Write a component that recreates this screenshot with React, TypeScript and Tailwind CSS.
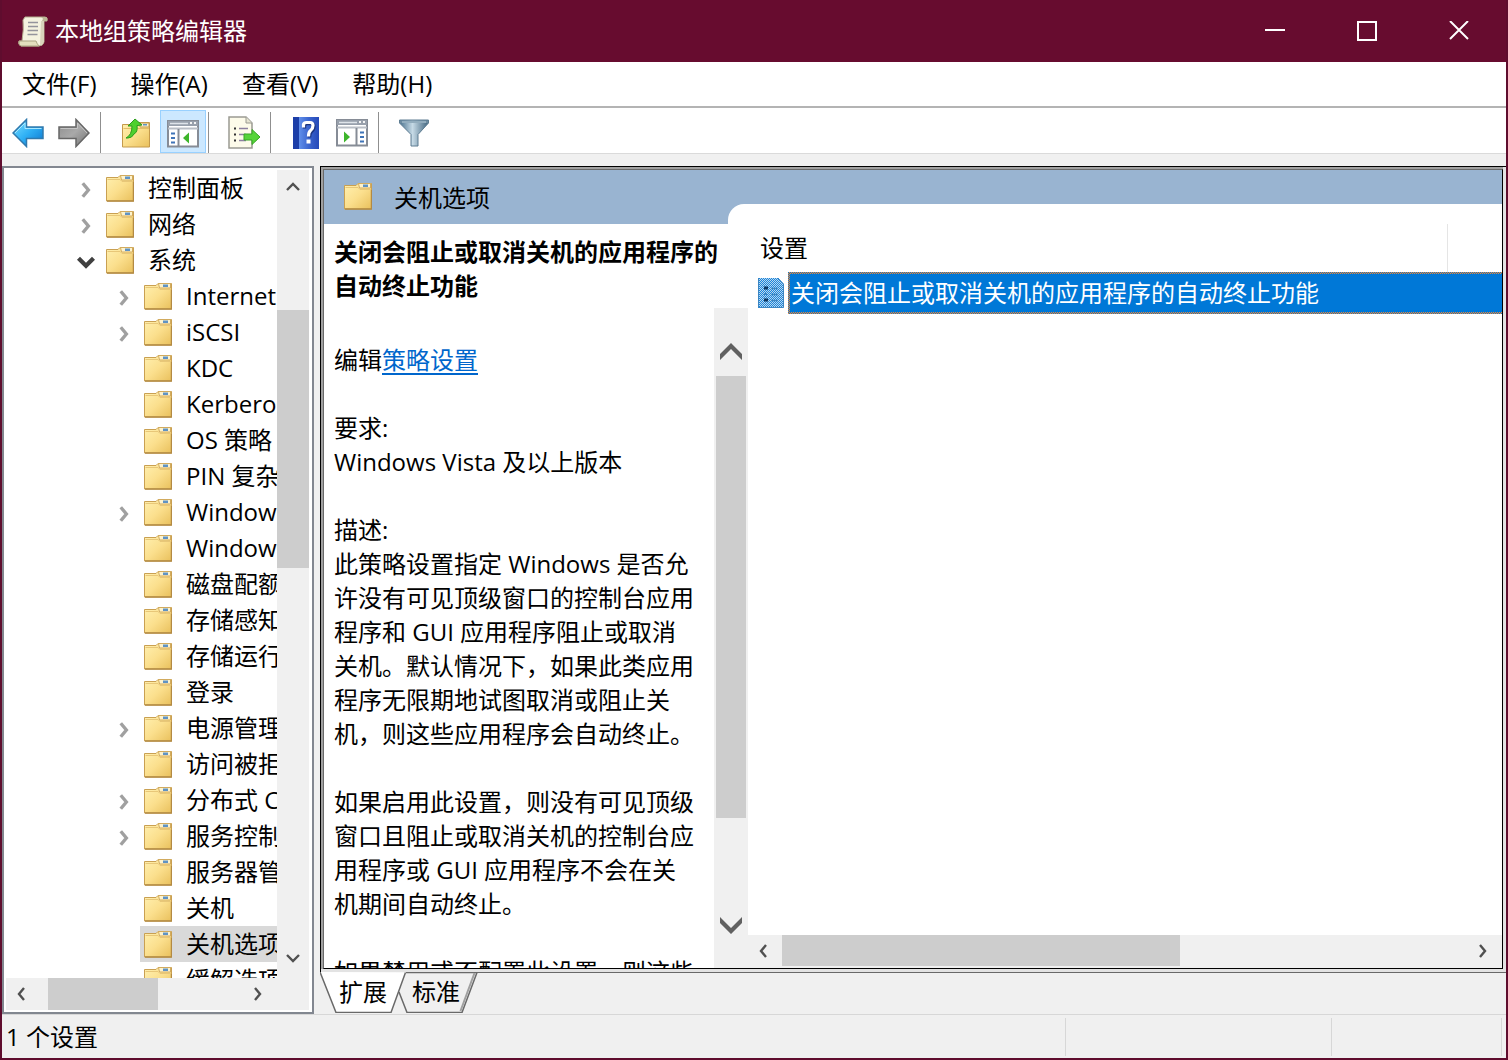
import React from "react";

type Dir = "up" | "down" | "left" | "right";

const chevronPaths: Record<Dir, string> = {
  up: "M2 10 L8 4 L14 10",
  down: "M2 5 L8 11 L14 5",
  left: "M10 2 L5 8 L10 14",
  right: "M6 2 L11 8 L6 14",
};

const bigChevronPaths = {
  up: "M0 17 L11 6 L22 17 V11 L11 0 L0 11 Z",
  down: "M0 0 L11 11 L22 0 V6 L11 17 L0 6 Z",
};

function Chevron({ dir, color = "#505050", width = 2.4, className = "size-4" }: { dir: Dir; color?: string; width?: number; className?: string }) {
  return (
    <svg viewBox="0 0 16 16" className={className} fill="none" stroke={color} strokeWidth={width} aria-hidden="true">
      <path d={chevronPaths[dir]} />
    </svg>
  );
}

function BigChevron({ dir }: { dir: "up" | "down" }) {
  return (
    <svg viewBox="0 0 22 17" className="h-[17px] w-[22px]" fill="#606060" aria-hidden="true">
      <path d={bigChevronPaths[dir]} />
    </svg>
  );
}

function Gradients() {
  return (
    <svg className="absolute size-0" aria-hidden="true">
      <defs>
        <linearGradient id="folder" x1="0" y1="0" x2="1" y2="1">
          <stop offset="0" stopColor="#fff0b0" />
          <stop offset="0.5" stopColor="#fbdf8d" />
          <stop offset="1" stopColor="#e9c05c" />
        </linearGradient>
        <linearGradient id="blueArrow" x1="0" y1="0" x2="1" y2="1">
          <stop offset="0" stopColor="#7fe0ff" />
          <stop offset="0.5" stopColor="#2fb0f5" />
          <stop offset="1" stopColor="#0a72cc" />
        </linearGradient>
        <linearGradient id="grayArrow" x1="0" y1="0" x2="1" y2="1">
          <stop offset="0" stopColor="#8c8c8c" />
          <stop offset="0.5" stopColor="#a9a9a9" />
          <stop offset="1" stopColor="#727272" />
        </linearGradient>
        <linearGradient id="help" x1="0" y1="0" x2="1" y2="0">
          <stop offset="0" stopColor="#1c3ea8" />
          <stop offset="0.22" stopColor="#1c3ea8" />
          <stop offset="0.24" stopColor="#5f8eea" />
          <stop offset="0.6" stopColor="#3c66cf" />
          <stop offset="1" stopColor="#2549b8" />
        </linearGradient>
        <linearGradient id="funnel" x1="0" y1="0" x2="1" y2="0">
          <stop offset="0" stopColor="#48708c" />
          <stop offset="0.45" stopColor="#c6dae6" />
          <stop offset="1" stopColor="#3f637d" />
        </linearGradient>
      </defs>
    </svg>
  );
}

function FolderIcon() {
  return (
    <svg viewBox="0 0 28 27" className="h-[27px] w-7 shrink-0" aria-hidden="true">
      <path d="M0.5 2.5 H12 L14 0.500 H27.5 V26 H0.5 Z" fill="url(#folder)" stroke="#c9a052" />
      <path d="M14.500 0.500 H26.5 V5 H15.500 Z" fill="#fdf3cd" stroke="#d2ab5e" />
      <path d="M19 1.500 H24 V4 H19 Z" fill="#5f93c4" />
      <path d="M1.500 4.500 H14 L16 6.500 H27" fill="none" stroke="#e8c778" />
      <path d="M1 26 H27.5 V7" fill="none" stroke="#b38a43" strokeWidth="1.5" />
    </svg>
  );
}

function ScrollIcon() {
  return (
    <svg viewBox="0 0 30 32" className="h-8 w-[30px]" aria-hidden="true">
      <path d="M7 2 H27 Q30 2 29 6 H26 V27 Q25 31 21 31 H3 Q0 30 1 26 H4 Q6 14 5 5 Z" fill="#f4f2df" stroke="#b5ae8f" />
      <path d="M23 2 Q26 3 24 6 H29 Q30 2 27 2 Z" fill="#bcb596" />
      <path d="M23 6 H26 V26 Q25 30 22 30 Z" fill="#d8d4bb" />
      <path d="M1 26 H18 Q19 29 21 31 H3 Q0 30 1 26 Z" fill="#e3dfbe" stroke="#a9a382" />
      <path d="M10 7.500 H20 M10 11.500 H20 M9.500 15.500 H20 M9.500 19.500 H19.500" stroke="#94949c" strokeWidth="1.600" />
    </svg>
  );
}

function ArrowIcon({ forward }: { forward?: boolean }) {
  return forward ? (
    <svg viewBox="0 0 32 30" className="h-[30px] w-8" aria-hidden="true">
      <path d="M31 15 L18 1.500 V9 H1 V20.500 H18 V28.500 Z" fill="url(#grayArrow)" stroke="#666" strokeWidth="1.500" />
      <path d="M29 15 L19.500 5 V10.500 H2.500" fill="none" stroke="#c4c4c4" />
    </svg>
  ) : (
    <svg viewBox="0 0 32 30" className="h-[30px] w-8" aria-hidden="true">
      <path d="M1 15 L14.500 1.500 V9 H31 V20.500 H14.500 V28.500 Z" fill="url(#blueArrow)" stroke="#3079ad" strokeWidth="1.500" />
      <path d="M3 15 L13 5 V10.500 H29.500" fill="none" stroke="#a8e8ff" />
    </svg>
  );
}

function UpFolderIcon() {
  return (
    <svg viewBox="0 0 28 30" className="h-[30px] w-7" aria-hidden="true">
      <path d="M0.500 6.500 H10 L12 4.500 H27.500 V29 H0.500 Z" fill="url(#folder)" stroke="#c49a4c" />
      <path d="M18 5 H27 V9 H18 Z" fill="#fdf3cd" stroke="#c49a4c" />
      <path d="M21 6 H25 V7.500 H21 Z" fill="#5f93c4" />
      <path d="M1.500 10.500 H27" stroke="#e3bd68" />
      <path d="M4 20 Q10 17 10 8 L6 8 L13 1 L20 7 L15 7.500 Q16 14 12 16 Q10 20 6 20 Z" fill="#4fd02f" stroke="#2c9c1b" />
    </svg>
  );
}

function PaneIcon({ flip }: { flip?: boolean }) {
  return (
    <svg viewBox="0 0 32 28" className="h-7 w-8" aria-hidden="true">
      <path d="M1 1 H31 V26.500 H1 Z" fill="#fff" stroke="#868c96" strokeWidth="2" />
      <path d="M1 1 H31 V6 H1 Z" fill="#98a0ac" />
      <path d="M3 3.500 H21" stroke="#dfe4ea" strokeWidth="1.500" />
      <path d="M23 3 h2 M27 3 h2" stroke="#f4f4f4" strokeWidth="2" />
      <path d="M1 8.500 H31" stroke="#b9bec6" strokeWidth="2" />
      {flip ? (
        <>
          <path d="M20.500 9 V27" stroke="#868c96" strokeWidth="2" />
          <path d="M24 13.500 h4 M24 18 h4 M24 22.500 h4" stroke="#3f74b8" strokeWidth="2" />
          <path d="M8 12.500 L14 18 L8 23.500 Z" fill="#3db52b" />
        </>
      ) : (
        <>
          <path d="M11.500 9 V27" stroke="#868c96" strokeWidth="2" />
          <path d="M4 13.500 h4 M4 18 h4 M4 22.500 h4" stroke="#3f74b8" strokeWidth="2" />
          <path d="M22 12.500 L16 18 L22 23.500 Z" fill="#3db52b" />
        </>
      )}
    </svg>
  );
}

function ExportIcon() {
  return (
    <svg viewBox="0 0 33 33" className="size-[33px]" aria-hidden="true">
      <path d="M1 1 H18 L24 7 V32 H1 Z" fill="#fdfbea" stroke="#9a9a92" strokeWidth="1.500" />
      <path d="M18 1 V7 H24" fill="#e6e4d2" stroke="#9a9a92" />
      <path d="M6 12.500 h2 M6 18.500 h2 M6 24.500 h2" stroke="#333" strokeWidth="2" />
      <path d="M11 12.500 H20 M11 18.500 H18 M11 24.500 H18" stroke="#8d80a0" strokeWidth="1.500" />
      <path d="M16 18 H24 V13.500 L32 21 L24 28.500 V24 H16 Z" fill="#56d43a" stroke="#37a624" />
    </svg>
  );
}

function HelpIcon() {
  return (
    <svg viewBox="0 0 26 32" className="h-8 w-[26px]" aria-hidden="true">
      <path d="M0 0 H26 V32 H0 Z" fill="url(#help)" />
      <path d="M10.500 10.500 V7.500 Q11 5.500 13.500 5.500 H17 Q20 5.500 20 8.500 Q20 11.500 17.500 13.500 Q15.500 15 15.500 19.500" fill="none" stroke="#1c3580" strokeWidth="3.500" transform="translate(1 1)" />
      <path d="M10.500 10.500 V7.500 Q11 5.500 13.500 5.500 H17 Q20 5.500 20 8.500 Q20 11.500 17.500 13.500 Q15.500 15 15.500 19.500" fill="none" stroke="#fff" strokeWidth="3.200" />
      <path d="M13.500 22.500 h4 v4 h-4 Z" fill="#fff" />
    </svg>
  );
}

function FunnelIcon() {
  return (
    <svg viewBox="0 0 30 28" className="h-7 w-[30px]" aria-hidden="true">
      <path d="M0.500 1 H29.500 V4 L19 15.500 V27 H12 V15.500 L0.500 4 Z" fill="url(#funnel)" stroke="#5e7d92" />
      <path d="M1 1.500 H29 V4 H1 Z" fill="#6c8ba0" />
      <path d="M3 3 H27" stroke="#b9cfdc" />
    </svg>
  );
}

function PolicyIcon() {
  return (
    <svg viewBox="0 0 26 30" className="h-[30px] w-[26px] shrink-0" aria-hidden="true">
      <defs>
        <pattern id="dither" width="2" height="2" patternUnits="userSpaceOnUse">
          <path d="M0 0 H2 V2 H0 Z" fill="#1d84dc" />
          <path d="M0 0 h1 v1 h-1 Z M1 1 h1 v1 h-1 Z" fill="#b9d9ee" />
        </pattern>
      </defs>
      <path d="M0 0 H20 L26 6 V30 H0 Z" fill="url(#dither)" />
      <path d="M0.500 0 V29.500 H25.500 V6 L20 0" fill="none" stroke="#3d86c2" />
      <path d="M6 10 h4 M6 22 h4" stroke="#0b3763" strokeWidth="3" />
      <path d="M6 16 h3" stroke="#3d86c2" strokeWidth="2" />
      <path d="M13 10.500 h7 M13 16.500 h7 M13 22.500 h7" stroke="#3d86c2" strokeWidth="1.500" />
    </svg>
  );
}

interface Node {
  label: string;
  child?: boolean;
  state?: "closed" | "open";
  selected?: boolean;
}

const nodes: Node[] = [
  { label: "控制面板", state: "closed" },
  { label: "网络", state: "closed" },
  { label: "系统", state: "open" },
  { label: "Internet", child: true, state: "closed" },
  { label: "iSCSI", child: true, state: "closed" },
  { label: "KDC", child: true },
  { label: "Kerberos", child: true },
  { label: "OS 策略", child: true },
  { label: "PIN 复杂", child: true },
  { label: "Windows", child: true, state: "closed" },
  { label: "Windows", child: true },
  { label: "磁盘配额", child: true },
  { label: "存储感知", child: true },
  { label: "存储运行", child: true },
  { label: "登录", child: true },
  { label: "电源管理", child: true, state: "closed" },
  { label: "访问被拒", child: true },
  { label: "分布式 C", child: true, state: "closed" },
  { label: "服务控制", child: true, state: "closed" },
  { label: "服务器管", child: true },
  { label: "关机", child: true },
  { label: "关机选项", child: true, selected: true },
  { label: "缓解选项", child: true },
];

function TreeRow({ node }: { node: Node }) {
  return (
    <li
      role="treeitem"
      aria-selected={!!node.selected}
      aria-expanded={node.state ? node.state === "open" : undefined}
      className={node.child ? "flex h-9 pl-[104px]" : "flex h-9 pl-[66px]"}
    >
      <span className="flex w-[30px] shrink-0 items-center pt-1 pl-1">
        {node.state === "closed" && <Chevron dir="right" color="#a0a0a0" width={3} className="size-[18px]" />}
        {node.state === "open" && <Chevron dir="down" color="#404040" width={3.4} className="size-5" />}
      </span>
      <span className={node.selected ? "flex flex-1 items-center bg-[#d9d9d9] pl-1" : "flex flex-1 items-center pl-1"}>
        <FolderIcon />
        <span className="pl-3.5 whitespace-nowrap">{node.label}</span>
      </span>
    </li>
  );
}

const menus = ["文件(F)", "操作(A)", "查看(V)", "帮助(H)"];

function ToolButton({ label, active, children }: { label: string; active?: boolean; children: React.ReactNode }) {
  return (
    <button
      type="button"
      aria-label={label}
      className={
        active
          ? "flex w-[46px] items-center justify-center border border-[#99d1ff] bg-[#cce8ff] pt-1"
          : "flex w-[46px] items-center justify-center pt-0.5"
      }
    >
      {children}
    </button>
  );
}

function Divider() {
  return <div className="mt-0.5 mr-3 w-px bg-[#8f8f8f]" />;
}

export default function App() {
  return (
    <div className="flex h-screen flex-col overflow-hidden border-x-2 border-b-2 border-[#5f0d2e] bg-[#f0f0f0] font-['Open_Sans','Noto_Sans_CJK_SC',sans-serif] text-2xl text-black">
      <Gradients />
      <header className="-mx-0.5 flex h-[62px] shrink-0 items-center bg-[#670c2f] text-white">
        <div className="flex flex-1 items-center gap-[7px] pl-[18px]">
          <ScrollIcon />
          <h1>本地组策略编辑器</h1>
        </div>
        <button type="button" aria-label="最小化" className="flex h-full w-[92px] items-center justify-center">
          <svg viewBox="0 0 20 20" className="size-5" fill="none" stroke="#fff" strokeWidth="2" aria-hidden="true"><path d="M0 9 H20" /></svg>
        </button>
        <button type="button" aria-label="最大化" className="flex h-full w-[92px] items-center justify-center">
          <svg viewBox="0 0 20 20" className="size-5" fill="none" stroke="#fff" strokeWidth="2" aria-hidden="true"><path d="M1 1 H19 V19 H1 Z" /></svg>
        </button>
        <button type="button" aria-label="关闭" className="mr-[3px] flex h-full w-[92px] items-center justify-center">
          <svg viewBox="0 0 20 20" className="size-5" fill="none" stroke="#fff" strokeWidth="2" aria-hidden="true"><path d="M1 0 L19 18 M19 0 L1 18" /></svg>
        </button>
      </header>

      <nav className="flex h-[46px] shrink-0 items-center gap-[34px] border-b-2 border-[#b4b4b4] bg-white pl-5">
        {menus.map((m) => (
          <button key={m} type="button" className="whitespace-nowrap">{m}</button>
        ))}
      </nav>

      <div role="toolbar" aria-label="工具栏" className="flex h-[46px] shrink-0 border-b border-[#dadada] bg-white pt-0.5 pl-[3px]">
        <ToolButton label="后退"><ArrowIcon /></ToolButton>
        <ToolButton label="前进"><ArrowIcon forward /></ToolButton>
        <div className="w-[3px]" />
        <Divider />
        <ToolButton label="上一级"><UpFolderIcon /></ToolButton>
        <div className="w-px" />
        <ToolButton label="显示/隐藏控制台树" active><PaneIcon /></ToolButton>
        <div className="w-0.5" />
        <Divider />
        <ToolButton label="导出列表"><ExportIcon /></ToolButton>
        <div className="w-[3px]" />
        <Divider />
        <ToolButton label="帮助"><HelpIcon /></ToolButton>
        <ToolButton label="显示/隐藏操作窗格"><PaneIcon flip /></ToolButton>
        <div className="w-[3px]" />
        <Divider />
        <ToolButton label="筛选器"><FunnelIcon /></ToolButton>
      </div>

      <main className="flex min-h-0 flex-1 gap-1.5 pt-3">
        <section className="flex w-[312px] shrink-0 border-2 border-[#828790] bg-white p-0.5">
          <div className="flex min-w-0 flex-1 flex-col">
            <ul role="tree" aria-label="控制台树" className="min-h-0 flex-1 overflow-hidden leading-9">
              {nodes.map((n, i) => <TreeRow key={i} node={n} />)}
            </ul>
            <div className="flex h-8 shrink-0 items-center bg-[#f0f0f0]">
              <button type="button" aria-label="向左滚动" className="flex w-[42px] pl-2"><Chevron dir="left" /></button>
              <div className="h-full w-[110px] bg-[#cdcdcd]" />
              <div className="flex-1" />
              <button type="button" aria-label="向右滚动" className="flex w-7"><Chevron dir="right" /></button>
            </div>
          </div>
          <div className="mr-px flex w-8 shrink-0 flex-col items-center bg-[#f0f0f0] pb-[34px]">
            <button type="button" aria-label="向上滚动" className="flex h-9 items-center"><Chevron dir="up" /></button>
            <div className="h-[104px]" />
            <div className="h-[258px] w-full bg-[#cdcdcd]" />
            <div className="flex-1" />
            <button type="button" aria-label="向下滚动" className="flex h-9 items-center"><Chevron dir="down" /></button>
          </div>
        </section>

        <section className="flex min-w-0 flex-1 flex-col">
          <div className="flex min-h-0 flex-1 border-t border-l border-black bg-[#e3e3e3] pr-[3px] pb-[3px]">
            <div className="flex min-w-0 flex-1 border-t-2 border-l-2 border-[#a0a0a0]">
              <div className="flex min-w-0 flex-1 flex-col border border-t-[#696969] border-r-black border-b-black border-l-[#696969] bg-white">
                <div className="flex h-[54px] shrink-0 items-stretch bg-[#99b4d1]">
                  <div className="flex w-[404px] shrink-0 items-center gap-[22px] pl-5 pb-0.5">
                    <FolderIcon />
                    <h2 className="pt-1">关机选项</h2>
                  </div>
                  <div className="mt-[34px] flex-1 rounded-tl-2xl bg-white" />
                </div>
                <div className="flex min-h-0 flex-1">
                  <div className="flex w-[424px] shrink-0 flex-col">
                    <h3 className="h-[84px] shrink-0 pt-[11px] pl-2.5 leading-[34px] font-bold whitespace-nowrap">
                      关闭会阻止或取消关机的应用程序的<br />自动终止功能
                    </h3>
                    <div className="flex min-h-0 flex-1">
                      <article className="min-w-0 flex-1 space-y-[34px] overflow-hidden pt-[35px] pl-2.5 leading-[34px] whitespace-nowrap">
                        <p>编辑<a href="#policy" className="text-[#0066cc] underline underline-offset-4">策略设置</a></p>
                        <p>要求:<br />Windows Vista 及以上版本</p>
                        <p>
                          描述:<br />此策略设置指定 Windows 是否允<br />许没有可见顶级窗口的控制台应用<br />程序和 GUI 应用程序阻止或取消<br />关机。默认情况下，如果此类应用<br />程序无限期地试图取消或阻止关<br />机，则这些应用程序会自动终止。
                        </p>
                        <p>
                          如果启用此设置，则没有可见顶级<br />窗口且阻止或取消关机的控制台应<br />用程序或 GUI 应用程序不会在关<br />机期间自动终止。
                        </p>
                        <p>如果禁用或不配置此设置，则这些</p>
                      </article>
                      <div className="flex w-[34px] shrink-0 flex-col items-center bg-[#f0f0f0] pb-[26px]">
                        <button type="button" aria-label="向上滚动" className="flex h-[68px] items-end pb-4"><BigChevron dir="up" /></button>
                        <div className="h-[442px] w-[30px] bg-[#cdcdcd]" />
                        <div className="flex-1" />
                        <button type="button" aria-label="向下滚动" className="flex h-[34px] items-center"><BigChevron dir="down" /></button>
                      </div>
                    </div>
                  </div>
                  <div className="flex min-w-0 flex-1 flex-col">
                    <table className="w-full table-fixed border-collapse text-left">
                      <thead>
                        <tr className="h-12">
                          <th className="border-r border-[#e5e5e5] pl-3 font-normal">设置</th>
                          <th className="w-[55px]" aria-label="状态" />
                        </tr>
                      </thead>
                      <tbody>
                        <tr>
                          <td colSpan={2} className="p-0">
                            <div className="flex items-center gap-1 pl-2.5">
                              <PolicyIcon />
                              <div className="flex-1 bg-[repeating-conic-gradient(#ff8728_0_25%,#0078d7_0_50%)] bg-[length:2px_2px] py-0.5 pl-0.5">
                                <span className="block h-[38px] bg-[#0078d7] pl-px leading-[38px] whitespace-nowrap text-white">关闭会阻止或取消关机的应用程序的自动终止功能</span>
                              </div>
                            </div>
                          </td>
                        </tr>
                      </tbody>
                    </table>
                    <div className="flex-1" />
                    <div className="flex h-[33px] shrink-0 items-center bg-[#f0f0f0] pb-0.5">
                      <button type="button" aria-label="向左滚动" className="flex w-[34px] pl-2"><Chevron dir="left" /></button>
                      <div className="h-full w-[398px] bg-[#cdcdcd]" />
                      <div className="flex-1" />
                      <button type="button" aria-label="向右滚动" className="flex w-7"><Chevron dir="right" /></button>
                    </div>
                  </div>
                </div>
              </div>
            </div>
          </div>
          <div role="tablist" className="flex h-[42px] shrink-0">
            <button type="button" role="tab" aria-selected="true" className="relative z-10 h-10 w-[86px]">
              <svg viewBox="0 0 86 41" className="absolute top-0 left-0 h-[41px] w-[86px]" aria-hidden="true">
                <path d="M0 0 L16 40.500 H71 L85.500 0.500" fill="#fff" stroke="#696969" strokeWidth="1.500" />
              </svg>
              <span className="relative">扩展</span>
            </button>
            <button type="button" role="tab" aria-selected="false" className="relative -ml-2 h-10 w-20 pr-1">
              <svg viewBox="0 0 80 41" className="absolute top-0 left-0 h-[41px] w-20" aria-hidden="true">
                <path d="M1 20 L9 40.500 H64 L79 0.500 H8" fill="#f0f0f0" stroke="#696969" strokeWidth="1.500" />
                <path d="M62.500 39 L76.500 1" stroke="#a0a0a0" strokeWidth="2" />
              </svg>
              <span className="relative">标准</span>
            </button>
            <div className="-ml-1 flex-1 border-t border-[#696969]" />
          </div>
        </section>
      </main>

      <footer className="flex h-11 shrink-0 border-t border-[#d7d7d7] pt-[3px] pb-0.5">
        <div className="flex flex-1 items-center pl-1">1 个设置</div>
        <div className="w-[266px] border-l border-[#d7d7d7]" />
        <div className="mr-1 w-[171px] border-x border-[#d7d7d7]" />
      </footer>
    </div>
  );
}
